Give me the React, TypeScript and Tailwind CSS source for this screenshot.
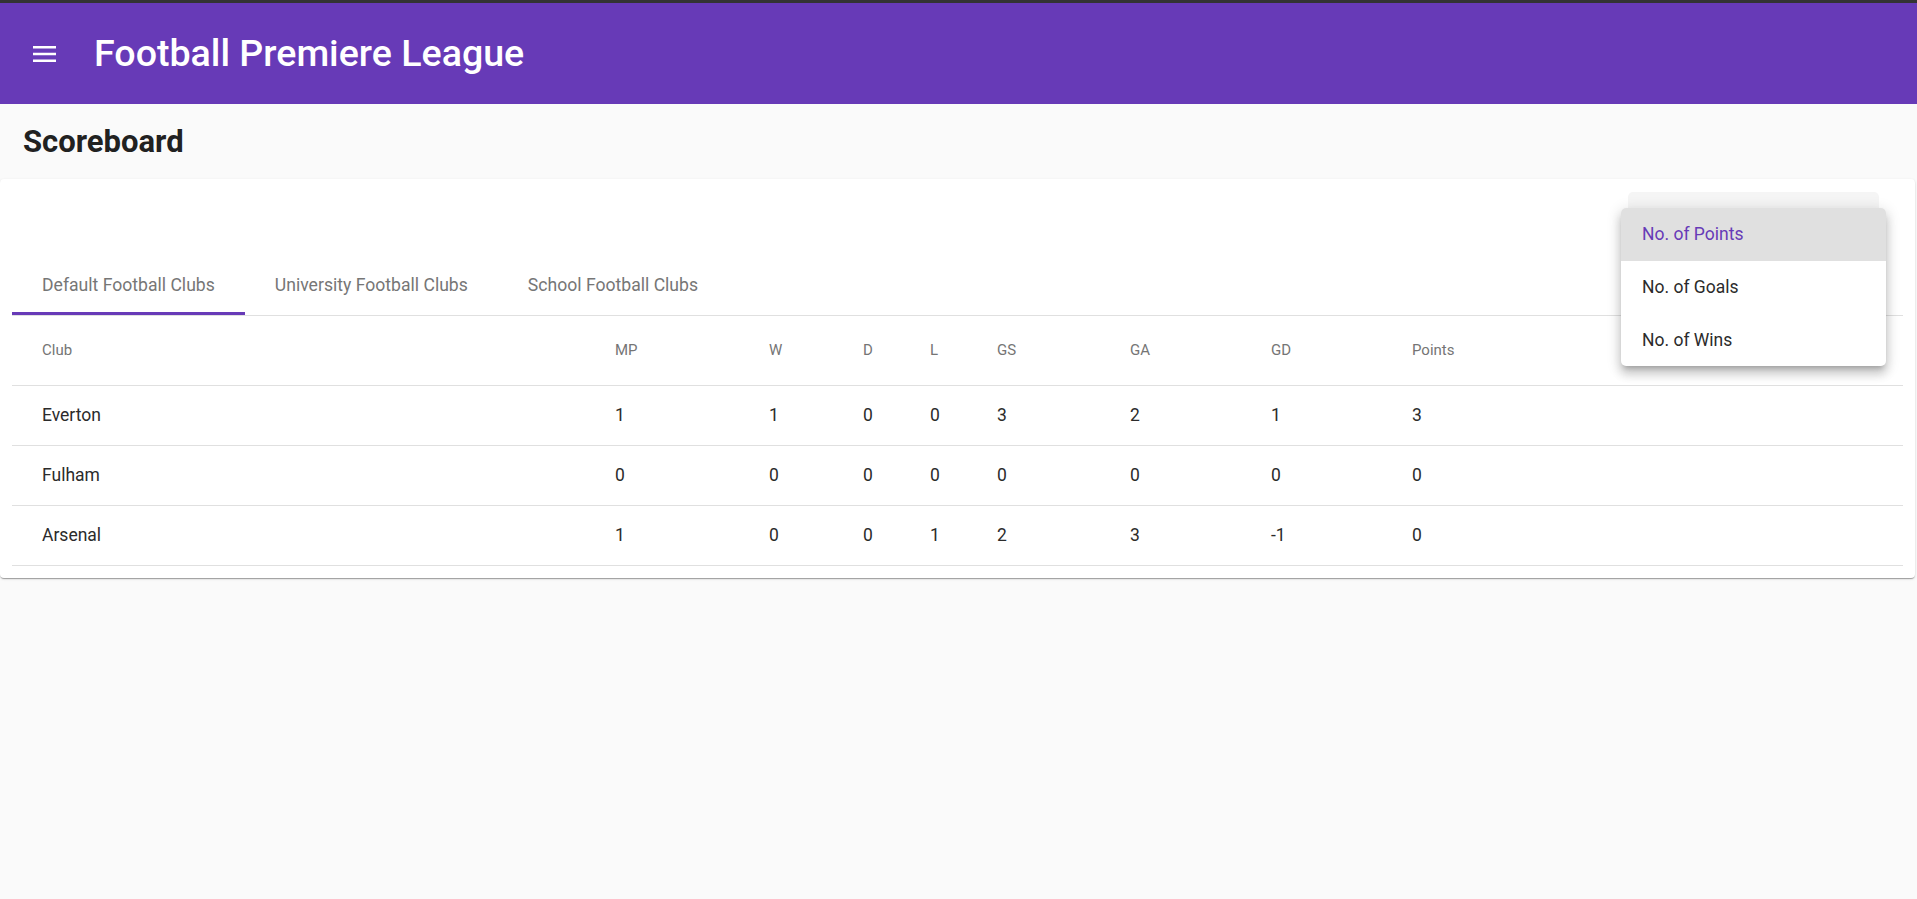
import React from "react"

const clubs = [
  { name: "Everton", mp: 1, w: 1, d: 0, l: 0, gs: 3, ga: 2, gd: 1, pts: 3 },
  { name: "Fulham", mp: 0, w: 0, d: 0, l: 0, gs: 0, ga: 0, gd: 0, pts: 0 },
  { name: "Arsenal", mp: 1, w: 0, d: 0, l: 1, gs: 2, ga: 3, gd: -1, pts: 0 },
]

const cols = "grid grid-cols-[603px_154px_94px_67px_67px_133px_141px_141px_1fr]"

const tabs = ["Default Football Clubs", "University Football Clubs", "School Football Clubs"]

const sortOptions = ["No. of Points", "No. of Goals", "No. of Wins"]

export default function App() {
  return (
    <div className="min-h-[899px] bg-[#fafafa] font-['Roboto',sans-serif]">
      <div className="h-[3px] bg-[#333]" />

      {/* Toolbar */}
      <header className="h-[101px] bg-[#673ab7] flex items-center pl-[33px]">
        <svg width="23" height="16" viewBox="0 0 18 12.5" fill="white">
          <path d="M0 12.5h18v-2H0v2zm0-5.25h18v-2H0v2zM0 0v2h18V0H0z" />
        </svg>
        <h1 className="ml-[38px] text-[37.6px] font-medium text-white leading-none">Football Premiere League</h1>
      </header>

      <div className="h-[75px] flex items-center pl-[23px]">
        <h2 className="text-[31px] font-bold text-[#212121] leading-none">Scoreboard</h2>
      </div>

      {/* Card */}
      <div className="mr-[2px] bg-white rounded-[4px] px-[12px] pb-[12px] shadow-[0_2px_1px_-1px_rgba(0,0,0,0.2),0_1px_1px_0_rgba(0,0,0,0.14),0_1px_3px_0_rgba(0,0,0,0.12)]">
        <div className="h-[76px] flex justify-end pr-[24px] pt-[13px]">
          <div className="relative w-[251px] h-[60px] bg-[#f5f5f5] rounded-t-[5px]">
            {/* open select panel */}
            <div className="absolute -left-[7px] top-[16px] w-[265px] z-10 bg-white rounded-[5px] overflow-hidden shadow-[0_5px_5px_-3px_rgba(0,0,0,0.2),0_8px_10px_1px_rgba(0,0,0,0.14),0_3px_14px_2px_rgba(0,0,0,0.12)]">
              {sortOptions.map((opt, i) => (
                <div
                  key={opt}
                  className={
                    i === 0
                      ? "h-[53px] flex items-center pl-[21px] text-[17.5px] bg-[#e0e0e0] text-[#673ab7]"
                      : "h-[52.5px] flex items-center pl-[21px] text-[17.5px] text-[#2b2b2b]"
                  }
                >
                  {opt}
                </div>
              ))}
            </div>
          </div>
        </div>

        {/* Tabs */}
        <div className="h-[61px] flex border-b border-[#e0e0e0]">
          {tabs.map((t, i) => (
            <div key={t} className="relative px-[30px] flex items-center text-[17.6px] text-[#767676]">
              {t}
              {i === 0 && <div className="absolute left-0 right-0 bottom-0 h-[3px] bg-[#673ab7]" />}
            </div>
          ))}
        </div>

        {/* Table */}
        <div className={`${cols} h-[70px] items-center border-b border-[#e0e0e0] text-[15px] text-[#757575]`}>
          <div className="pl-[30px]">Club</div>
          <div>MP</div>
          <div>W</div>
          <div>D</div>
          <div>L</div>
          <div>GS</div>
          <div>GA</div>
          <div>GD</div>
          <div>Points</div>
        </div>
        {clubs.map((c) => (
          <div key={c.name} className={`${cols} h-[60px] items-center border-b border-[#e0e0e0] text-[17.5px] text-[#2b2b2b]`}>
            <div className="pl-[30px]">{c.name}</div>
            <div>{c.mp}</div>
            <div>{c.w}</div>
            <div>{c.d}</div>
            <div>{c.l}</div>
            <div>{c.gs}</div>
            <div>{c.ga}</div>
            <div>{c.gd}</div>
            <div>{c.pts}</div>
          </div>
        ))}
      </div>
    </div>
  )
}
